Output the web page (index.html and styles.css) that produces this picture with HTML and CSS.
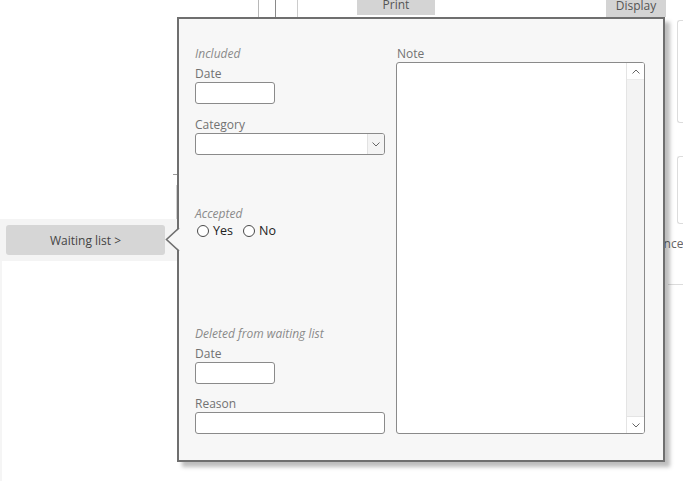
FILE: index.html
```html
<!DOCTYPE html>
<html lang="en">
<head>
<meta charset="utf-8">
<title>Waiting list</title>
<link rel="stylesheet" href="styles.css">
</head>
<body>
<div class="screen">
  <div class="app">
    <aside class="left-panel">
      <div class="left-top">
        <span class="lt-h"></span>
        <span class="lt-v"></span>
      </div>
      <div class="band">
        <div class="wait-btn">Waiting list &gt;</div>
      </div>
      <div class="left-rest"></div>
    </aside>
    <div class="toolbar">
      <span class="tb-line l1"></span>
      <span class="tb-line l2"></span>
      <span class="tb-line l3"></span>
      <span class="tb-btn print">Print</span>
      <span class="tb-btn display">Display</span>
    </div>
    <main class="center"></main>
    <aside class="right-panel">
      <div class="rbox r1"></div>
      <div class="rbox r2"></div>
      <div class="adv">Advanced</div>
      <div class="r-line"></div>
    </aside>
  </div>

  <div class="popover">
    <svg class="pointer" width="15" height="23" viewBox="0 0 15 23">
      <polygon points="15,0 1.5,11.5 15,23" fill="#f7f7f7"/>
      <polyline points="14,0 1.5,11.5 14,23" fill="none" stroke="#6f6f6f" stroke-width="1.6"/>
    </svg>
    <div class="col-left">
      <div class="head">Included</div>
      <div class="label">Date</div>
      <div class="field date"></div>
      <div class="label gap-a">Category</div>
      <div class="field select">
        <span class="sel-btn">
          <svg width="8" height="5" viewBox="0 0 8 5"><polyline points="0.5,0.5 4,4 7.5,0.5" fill="none" stroke="#666" stroke-width="1"/></svg>
        </span>
      </div>
      <div class="head accepted">Accepted</div>
      <div class="radios">
        <span class="radio"></span><span class="radio-text">Yes</span>
        <span class="radio second"></span><span class="radio-text">No</span>
      </div>
      <div class="head deleted">Deleted from waiting list</div>
      <div class="label">Date</div>
      <div class="field date"></div>
      <div class="label gap-b">Reason</div>
      <div class="field reason"></div>
    </div>
    <div class="col-right">
      <div class="label note">Note</div>
      <div class="textarea">
        <div class="scrollbar">
          <span class="sb-btn">
            <svg width="8" height="5" viewBox="0 0 8 5"><polyline points="0.5,4.5 4,1 7.5,4.5" fill="none" stroke="#666" stroke-width="1"/></svg>
          </span>
          <span class="sb-btn bottom">
            <svg width="8" height="5" viewBox="0 0 8 5"><polyline points="0.5,0.5 4,4 7.5,0.5" fill="none" stroke="#666" stroke-width="1"/></svg>
          </span>
        </div>
      </div>
    </div>
  </div>
</div>
</body>
</html>
```

FILE: styles.css
```css
html, body {
  margin: 0;
  padding: 0;
  background: #fff;
}

body {
  font-family: "Open Sans", "Noto Sans", sans-serif;
  font-size: 12px;
  color: #333;
}

.screen {
  position: relative;
  width: 683px;
  height: 481px;
  overflow: hidden;
  background: #fff;
}

.app {
  display: grid;
  grid-template-columns: 177px 1fr 47px;
  grid-template-rows: 17px 1fr;
  height: 100%;
}

/* left panel */
.left-panel {
  grid-row: 1 / 3;
  grid-column: 1;
  display: flex;
  flex-direction: column;
}

.left-top {
  height: 219px;
  display: flex;
  flex-direction: column;
  align-items: flex-end;
}

.lt-h {
  width: 4px;
  height: 1px;
  background: #9a9a9a;
  margin-top: 174px;
}

.lt-v {
  width: 1px;
  height: 34px;
  background: #d0d0d0;
  margin-top: 10px;
}

.band {
  height: 42px;
  box-sizing: border-box;
  padding: 6px 12px 6px 6px;
  background: #f4f4f4;
}

.wait-btn {
  width: 159px;
  height: 30px;
  border-radius: 3px;
  background: #d6d6d6;
  color: #444;
  line-height: 17px;
  display: flex;
  align-items: center;
  justify-content: center;
}

.left-rest {
  flex: 1;
  border-left: 2px solid #f5f5f5;
}

/* toolbar */
.toolbar {
  grid-row: 1;
  grid-column: 2 / 4;
  display: flex;
  align-items: flex-start;
  overflow: hidden;
  height: 17px;
}

.tb-line {
  flex-shrink: 0;
  width: 1px;
  height: 17px;
}

.l1 { margin-left: 81px; background: #b8b8b8; }
.l2 { margin-left: 16px; background: #8a8a8a; }
.l3 { margin-left: 21px; background: #cccccc; }

.tb-btn {
  flex-shrink: 0;
  display: block;
  background: #d4d4d4;
  color: #555;
  text-align: center;
}

.print {
  margin-left: 59px;
  width: 78px;
  height: 15px;
  line-height: 9px;
}

.display {
  margin-left: 171px;
  width: 60px;
  height: 17px;
  line-height: 12px;
}

/* right panel */
.right-panel {
  grid-row: 2;
  grid-column: 3;
  display: flex;
  flex-direction: column;
}

.rbox {
  margin-left: 41px;
  border: 1px solid #dcdcdc;
  border-right: none;
  border-radius: 3px 0 0 3px;
  box-sizing: border-box;
}

.r1 { margin-top: 3px; height: 103px; }
.r2 { margin-top: 33px; height: 68px; }

.adv {
  margin-top: 11px;
  line-height: 17px;
  color: #666;
  white-space: nowrap;
}

.r-line {
  margin-top: 32px;
  margin-left: 32px;
  height: 1px;
  background: #dcdcdc;
}

/* popover */
.popover {
  position: absolute;
  left: 177px;
  top: 17px;
  width: 488px;
  box-sizing: border-box;
  border: 2px solid #6f6f6f;
  background: #f7f7f7;
  box-shadow: 5px 5px 4px rgba(0, 0, 0, 0.26);
  padding: 26px 18px 26px 16px;
  display: grid;
  grid-template-columns: 190px 249px;
  column-gap: 11px;
}

.pointer {
  position: absolute;
  left: -14px;
  top: 209px;
  display: block;
}

.col-left,
.col-right {
  display: flex;
  flex-direction: column;
}

.head {
  font-style: italic;
  color: #8a8a8a;
  line-height: 17px;
  margin-bottom: 3px;
}

.label {
  color: #727272;
  line-height: 17px;
}

.gap-a { margin-top: 12px; }
.gap-b { margin-top: 11px; }

.field {
  box-sizing: border-box;
  height: 22px;
  border: 1px solid #8a8a8a;
  border-radius: 3px;
  background: #fff;
}

.date { width: 80px; }

.select {
  width: 190px;
  display: flex;
  justify-content: flex-end;
  overflow: hidden;
}

.sel-btn {
  width: 16px;
  border-left: 1px solid #e2e2e2;
  background: #f4f4f4;
  display: flex;
  align-items: center;
  justify-content: center;
}

.reason { width: 190px; }

.accepted { margin-top: 50px; margin-bottom: 0; }

.radios {
  display: flex;
  align-items: center;
  height: 17px;
  color: #222;
  font-size: 12.5px;
}

.radio {
  box-sizing: border-box;
  width: 12px;
  height: 12px;
  margin-left: 2px;
  border: 1px solid #4a4a4a;
  border-radius: 50%;
  background: #fff;
}

.radio.second { margin-left: 10px; }

.radio-text {
  margin-left: 4px;
  line-height: 17px;
}

.deleted { margin-top: 86px; }

/* note */
.note {
  margin-left: 1px;
}

.textarea {
  flex: 1;
  box-sizing: border-box;
  border: 1px solid #8a8a8a;
  border-radius: 3px;
  background: #fff;
  display: flex;
  justify-content: flex-end;
  overflow: hidden;
}

.scrollbar {
  width: 17px;
  border-left: 1px solid #e4e4e4;
  background: #f3f3f3;
  display: flex;
  flex-direction: column;
  justify-content: space-between;
}

.sb-btn {
  height: 16px;
  background: #fff;
  border-bottom: 1px solid #ececec;
  display: flex;
  align-items: center;
  justify-content: center;
}

.sb-btn.bottom {
  border-bottom: none;
  border-top: 1px solid #e4e4e4;
}
```
